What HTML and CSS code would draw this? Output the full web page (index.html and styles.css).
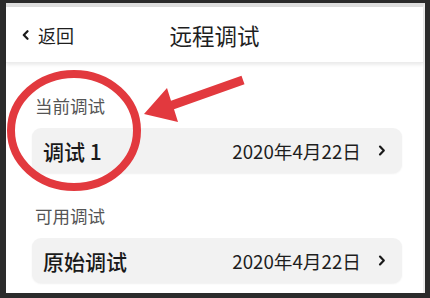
FILE: index.html
```html
<!DOCTYPE html>
<html lang="zh-CN">
<head>
<meta charset="utf-8">
<title>远程调试</title>
<link rel="stylesheet" href="styles.css">
</head>
<body>
<div class="screen">
  <header class="navbar">
    <div class="back">
      <svg class="back-icon" width="7" height="10" viewBox="0 0 7 10"><path d="M5.5 1.2 L1.8 5 L5.5 8.8" fill="none" stroke="#1a1a1a" stroke-width="2.2" stroke-linecap="round" stroke-linejoin="round"/></svg>
      <span>返回</span>
    </div>
    <h1 class="title">远程调试</h1>
  </header>
  <main class="content">
    <section class="section">
      <div class="label">当前调试</div>
      <div class="card">
        <span class="card-title">调试 1</span>
        <span class="card-date">2020年4月22日</span>
        <svg class="chev" width="8" height="11" viewBox="0 0 8 11"><path d="M2 1.6 L5.8 5.5 L2 9.4" fill="none" stroke="#1a1a1a" stroke-width="2.2" stroke-linecap="round" stroke-linejoin="round"/></svg>
      </div>
    </section>
    <section class="section">
      <div class="label">可用调试</div>
      <div class="card">
        <span class="card-title">原始调试</span>
        <span class="card-date">2020年4月22日</span>
        <svg class="chev" width="8" height="11" viewBox="0 0 8 11"><path d="M2 1.6 L5.8 5.5 L2 9.4" fill="none" stroke="#1a1a1a" stroke-width="2.2" stroke-linecap="round" stroke-linejoin="round"/></svg>
      </div>
    </section>
  </main>
</div>
<svg class="annotation" width="430" height="298" viewBox="0 0 430 298">
  <ellipse cx="74" cy="130.5" rx="63" ry="56.5" fill="none" stroke="#e2393e" stroke-width="8"/>
  <polygon points="144,114 167,88 171,100.7 241.5,75.7 244.5,84.3 174,109.3 178,122" fill="#e2393e"/>
</svg>
</body>
</html>
```
FILE: styles.css
```css
html, body {
  margin: 0;
  padding: 0;
}
body {
  width: 430px;
  height: 298px;
  background: #2b2b2b;
  padding: 3px 5px 5px 6px;
  box-sizing: border-box;
  position: relative;
  overflow: hidden;
  font-family: "Noto Sans CJK SC", "Noto Sans", sans-serif;
  color: #1e1e1e;
}
.screen {
  height: 290px;
  background: #ffffff;
  border-top: 4px solid #dedede;
  border-right: 2px solid #ececec;
  box-sizing: border-box;
  display: flex;
  flex-direction: column;
}
.navbar {
  height: 56px;
  flex: none;
  display: flex;
  align-items: center;
  position: relative;
  background: #ffffff;
  box-shadow: 0 2px 3px rgba(0, 0, 0, 0.08);
  border-bottom: 1px solid #ececec;
  box-sizing: border-box;
}
.back {
  display: flex;
  align-items: center;
  gap: 9px;
  padding-left: 16px;
  font-size: 18px;
  line-height: 24px;
  color: #1e1e1e;
}
.back-icon {
  display: block;
}
.title {
  position: absolute;
  left: 0;
  right: 0;
  top: 0;
  bottom: 0;
  margin: 0;
  display: flex;
  align-items: center;
  justify-content: center;
  font-size: 22.5px;
  font-weight: 400;
  color: #1e1e1e;
  pointer-events: none;
}
.content {
  padding: 0 21px 0 26px;
  display: flex;
  flex-direction: column;
}
.section {
  padding-top: 31px;
  display: flex;
  flex-direction: column;
  gap: 10px;
}
.label {
  font-size: 17.5px;
  line-height: 24px;
  color: #555555;
  padding-left: 3px;
}
.card {
  height: 45px;
  background: #f2f2f2;
  border-radius: 9px;
  box-shadow: 0 1px 2px rgba(0, 0, 0, 0.06);
  display: flex;
  align-items: center;
  padding: 0 16px 0 11px;
}
.card-title {
  font-size: 21px;
  font-weight: 500;
  color: #1a1a1a;
  flex: 1;
}
.card-date {
  font-size: 18.7px;
  color: #1e1e1e;
  margin-right: 17px;
}
.chev {
  display: block;
}
.annotation {
  position: absolute;
  left: 0;
  top: 0;
}
```
